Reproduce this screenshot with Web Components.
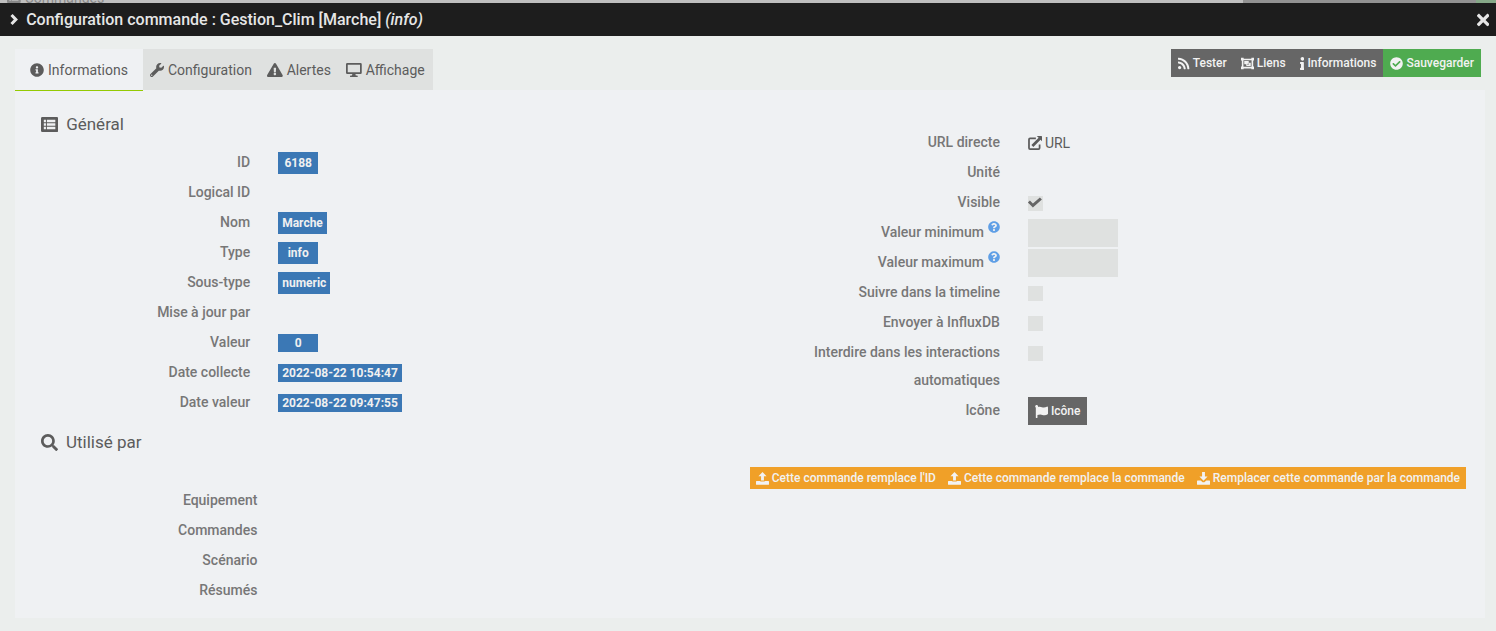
<!DOCTYPE html>
<html lang="fr">
<head>
<meta charset="utf-8">
<title>Configuration commande</title>
<style>
	body {
		margin: 0;
		min-height: 100vh;
		display: flex;
		flex-direction: column;
		background: #ebeeed;
		color: #5c5c5c;
		font: 14px/20px Roboto, "Liberation Sans", sans-serif;
	}
	cmd-dialog {
		flex: 1;
	}
</style>
</head>
<body>
<page-strip></page-strip>
<cmd-dialog>
	<span slot="title">Configuration commande : Gestion_Clim [Marche] <i>(info)</i></span>
	<cmd-toolbar></cmd-toolbar>
	<cmd-form></cmd-form>
</cmd-dialog>

<script>
/////////////////    icons    /////////////////
// name: [viewBox width, viewBox height, markup]
const icons = {
	'chevron': [320, 512, '<path d="M60 80l170 176L60 432" fill="none" stroke="currentColor" stroke-width="120"/>'],
	'times': [352, 512, '<path d="M242.72 256l100.07-100.07c12.28-12.28 12.28-32.19 0-44.48l-22.24-22.24c-12.28-12.28-32.19-12.28-44.48 0L176 189.28 75.93 89.21c-12.28-12.28-32.19-12.28-44.48 0L9.21 111.45c-12.28 12.28-12.28 32.19 0 44.48L109.28 256 9.21 356.07c-12.28 12.28-12.28 32.19 0 44.48l22.24 22.24c12.28 12.28 32.2 12.28 44.48 0L176 322.72l100.07 100.07c12.28 12.28 32.2 12.28 44.48 0l22.24-22.24c12.28-12.28 12.28-32.19 0-44.48L242.72 256z"/>'],
	'info-circle': [512, 512, '<path d="M256 8C119.043 8 8 119.083 8 256c0 136.997 111.043 248 248 248s248-111.003 248-248C504 119.083 392.957 8 256 8zm0 110c23.196 0 42 18.804 42 42s-18.804 42-42 42-42-18.804-42-42 18.804-42 42-42zm56 254c0 6.627-5.373 12-12 12h-88c-6.627 0-12-5.373-12-12v-24c0-6.627 5.373-12 12-12h12v-64h-12c-6.627 0-12-5.373-12-12v-24c0-6.627 5.373-12 12-12h64c6.627 0 12 5.373 12 12v100h12c6.627 0 12 5.373 12 12v24z"/>'],
	'wrench': [512, 512, '<path d="M507.73 109.1c-2.24-9.03-13.54-12.09-20.12-5.51l-74.36 74.36-67.88-11.31-11.31-67.88 74.36-74.36c6.62-6.62 3.43-17.9-5.66-20.16-47.38-11.74-99.55.91-136.58 37.93-39.64 39.64-50.55 97.1-34.05 147.2L18.74 402.76c-24.99 24.99-24.99 65.51 0 90.5 24.99 24.99 65.51 24.99 90.5 0l213.21-213.21c50.12 16.71 107.47 5.68 147.37-34.22 37.07-37.07 49.7-89.32 37.91-136.73zM64 472c-13.25 0-24-10.75-24-24 0-13.26 10.75-24 24-24s24 10.74 24 24c0 13.25-10.75 24-24 24z"/>'],
	'warning': [576, 512, '<path d="M569.517 440.013C587.975 472.007 564.806 512 527.94 512H48.054c-36.937 0-59.999-40.055-41.577-71.987L246.423 23.985c18.467-32.009 64.72-31.951 83.154 0l239.94 416.028zM288 354c-25.405 0-46 20.595-46 46s20.595 46 46 46 46-20.595 46-46-20.595-46-46-46zm-43.673-165.346l7.418 136c.347 6.364 5.609 11.346 11.982 11.346h48.546c6.373 0 11.635-4.982 11.982-11.346l7.418-136c.375-6.874-5.098-12.654-11.982-12.654h-63.383c-6.884 0-12.356 5.78-11.981 12.654z"/>'],
	'desktop': [576, 512, '<path fill-rule="evenodd" d="M48 0h480a48 48 0 0 1 48 48v304a48 48 0 0 1-48 48H344l14 56h46a24 24 0 0 1 24 24v32H148v-32a24 24 0 0 1 24-24h46l14-56H48a48 48 0 0 1-48-48V48A48 48 0 0 1 48 0zm16 64v272h448V64z"/>'],
	'list': [512, 448, '<path fill-rule="evenodd" d="M40 0h432a40 40 0 0 1 40 40v368a40 40 0 0 1-40 40H40a40 40 0 0 1-40-40V40A40 40 0 0 1 40 0zm44 84v76h64V84zm92 0v76h252V84zM84 188v72h64v-72zm92 0v72h252v-72zM84 288v76h64v-76zm92 0v76h252v-76z"/>'],
	'search': [512, 512, '<path d="M505 442.7L405.3 343c-4.5-4.5-10.6-7-17-7H372c27.6-35.3 44-79.7 44-128C416 93.1 322.9 0 208 0S0 93.1 0 208s93.1 208 208 208c48.3 0 92.7-16.4 128-44v16.3c0 6.4 2.5 12.5 7 17l99.7 99.7c9.4 9.4 24.6 9.4 33.9 0l28.3-28.3c9.4-9.4 9.4-24.6.1-34zM208 336c-70.7 0-128-57.2-128-128 0-70.7 57.2-128 128-128 70.7 0 128 57.2 128 128 0 70.7-57.2 128-128 128z"/>'],
	'rss': [448, 512, '<path d="M128.081 415.959c0 35.369-28.672 64.041-64.041 64.041S0 451.328 0 415.959s28.672-64.041 64.041-64.041 64.04 28.673 64.04 64.041zm175.66 47.25c-8.354-154.6-132.185-278.587-286.95-286.95C7.656 175.765 0 183.105 0 192.253v48.069c0 8.415 6.49 15.472 14.887 16.018 111.832 7.284 201.473 96.702 208.772 208.772.547 8.397 7.604 14.887 16.018 14.887h48.069c9.149.001 16.489-7.655 15.995-16.79zm144.249.288C439.596 229.677 251.465 40.445 16.503 32.01 7.473 31.686 0 38.981 0 48.016v48.068c0 8.625 6.835 15.645 15.453 15.999 191.179 7.839 344.627 161.316 352.465 352.465.353 8.618 7.373 15.453 15.999 15.453h48.068c9.034-.001 16.329-7.474 16.005-16.504z"/>'],
	'object-group': [512, 512, '<path fill-rule="evenodd" d="M0 32h104v32h304V32h104v104h-32v240h32v104H408v-32H104v32H0V376h32V136H0zm96 96v256h320V128z"/><path d="M128 160h176v64h80v128H208v-64h-80z"/><path d="M304 256v32h-64" fill="none" stroke="#666" stroke-width="24"/>'],
	'info': [192, 512, '<path d="M20 424.229h20V279.771H20c-11.046 0-20-8.954-20-20V212c0-11.046 8.954-20 20-20h112c11.046 0 20 8.954 20 20v212.229h20c11.046 0 20 8.954 20 20V492c0 11.046-8.954 20-20 20H20c-11.046 0-20-8.954-20-20v-47.771c0-11.046 8.954-20 20-20zM96 0C56.235 0 24 32.235 24 72s32.235 72 72 72 72-32.235 72-72S135.764 0 96 0z"/>'],
	'check-circle': [512, 512, '<path d="M504 256c0 136.967-111.033 248-248 248S8 392.967 8 256 119.033 8 256 8s248 111.033 248 248zM227.314 387.314l184-184c6.248-6.248 6.248-16.379 0-22.627l-22.627-22.627c-6.248-6.249-16.379-6.249-22.628 0L216 308.118l-70.059-70.059c-6.248-6.248-16.379-6.248-22.628 0l-22.627 22.627c-6.248 6.248-6.248 16.379 0 22.627l104 104c6.249 6.249 16.379 6.249 22.628.001z"/>'],
	'external': [512, 512, '<path d="M288 88H76a40 40 0 0 0-40 40v308a40 40 0 0 0 40 40h308a40 40 0 0 0 40-40V310" fill="none" stroke="currentColor" stroke-width="64"/><path d="M320 0h168a24 24 0 0 1 24 24v168l-52-52-264 264-72-72L388 68z"/>'],
	'question': [512, 512, '<path d="M504 256c0 136.997-111.043 248-248 248S8 392.997 8 256C8 119.083 119.043 8 256 8s248 111.083 248 248zM262.655 90c-54.497 0-89.255 22.957-116.549 63.758-3.536 5.286-2.353 12.415 2.715 16.258l34.699 26.31c5.205 3.947 12.621 3.008 16.665-2.122 17.864-22.658 30.113-35.797 57.303-35.797 20.429 0 45.698 13.148 45.698 32.958 0 14.976-12.363 22.667-32.534 33.976C247.128 238.528 216 254.941 216 296v4c0 6.627 5.373 12 12 12h56c6.627 0 12-5.373 12-12v-1.333c0-28.462 83.186-29.647 83.186-106.667 0-58.002-60.165-102-116.531-102zM256 338c-25.365 0-46 20.635-46 46 0 25.364 20.635 46 46 46s46-20.636 46-46c0-25.365-20.635-46-46-46z"/>'],
	'flag': [512, 512, '<path d="M349.565 98.783C295.978 98.783 251.721 64 184.348 64c-24.955 0-47.309 4.384-68.045 12.013a55.947 55.947 0 0 0 3.586-23.562C118.117 24.015 94.806 1.206 66.338.048 34.345-1.254 8 24.296 8 56c0 19.026 9.497 35.825 24 45.945V488c0 13.255 10.745 24 24 24h16c13.255 0 24-10.745 24-24v-94.4c28.311-12.064 63.582-22.122 114.435-22.122 53.588 0 97.844 34.783 165.217 34.783 48.169 0 86.667-16.294 122.505-40.858C506.84 359.452 512 349.571 512 339.045v-243.1c0-23.393-24.269-38.87-45.485-29.016-34.338 15.948-76.454 31.854-116.95 31.854z"/>'],
	'upload': [512, 512, '<path d="M256 0l160 168H312v168H200V168H96zM24 352h136a48 48 0 0 0 48 24h96a48 48 0 0 0 48-24h136a24 24 0 0 1 24 24v104a24 24 0 0 1-24 24H24a24 24 0 0 1-24-24V376a24 24 0 0 1 24-24z"/>'],
	'download': [512, 512, '<path d="M200 0h112v176h104L256 344 96 176h104zM24 336h120l80 64h64l80-64h120a24 24 0 0 1 24 24v120a24 24 0 0 1-24 24H24a24 24 0 0 1-24-24V360a24 24 0 0 1 24-24z"/>'],
};

class FaIcon extends HTMLElement {
	constructor() {
		super();
		this.attachShadow({ mode: 'open' });
	}

	connectedCallback() {
		const [w, h, body] = icons[this.getAttribute('name')];
		this.shadowRoot.innerHTML = `
			<style>
				:host { display: inline-flex; flex: none; }
				svg { height: var(--icon-size, 1em); width: auto; fill: currentColor; }
			</style>
			<svg viewBox="0 0 ${w} ${h}" aria-hidden="true">${body}</svg>
		`;
	}
}

customElements.define('fa-icon', FaIcon);


/////////////////    page behind the dialog    /////////////////
const stripTemplate = document.createElement('template');
stripTemplate.innerHTML = `
	<style>
		:host {
			display: flex;
			align-items: flex-end;
			height: 3px;
			overflow: hidden;
			background: #bfbfbf;
			color: #888;
			font-size: 14px;
			line-height: 10px;
		}
		.title { display: flex; align-items: flex-end; gap: 4px; padding-left: 7px; flex: 1; --icon-size: 12px; }
		.bar { width: 233px; height: 3px; background: #929292; }
		.save { width: 20px; height: 3px; background: #86a888; }
	</style>
	<div class="title"><fa-icon name="list"></fa-icon>Commandes</div>
	<div class="bar"></div>
	<div class="save"></div>
`;

class PageStrip extends HTMLElement {
	constructor() {
		super();
		this.attachShadow({ mode: 'open' });
		this.shadowRoot.appendChild(stripTemplate.content.cloneNode(true));
	}
}

customElements.define('page-strip', PageStrip);


/////////////////    dialog    /////////////////
const dialogTemplate = document.createElement('template');
dialogTemplate.innerHTML = `
	<style>
		:host { display: block; }
		header {
			display: flex;
			align-items: center;
			gap: 8px;
			height: 33px;
			padding: 0 7px 0 10px;
			background: #1d1d1d;
			color: #e6e6e6;
			font-size: 16px;
			font-weight: 500;
		}
		.chevron { --icon-size: 13px; }
		.title { flex: 1; }
		button {
			display: flex;
			padding: 0;
			border: 0;
			background: none;
			color: inherit;
			--icon-size: 18px;
		}
		main { padding: 13px 11px 13px 15px; }
	</style>
	<header>
		<fa-icon class="chevron" name="chevron"></fa-icon>
		<div class="title"><slot name="title"></slot></div>
		<button type="button" aria-label="Fermer"><fa-icon name="times"></fa-icon></button>
	</header>
	<main><slot></slot></main>
`;

class CmdDialog extends HTMLElement {
	constructor() {
		super();
		this.attachShadow({ mode: 'open' });
		this.shadowRoot.appendChild(dialogTemplate.content.cloneNode(true));
	}
}

customElements.define('cmd-dialog', CmdDialog);


/////////////////    tabs and actions    /////////////////
const toolbarTemplate = document.createElement('template');
toolbarTemplate.innerHTML = `
	<style>
		:host {
			display: flex;
			justify-content: space-between;
			align-items: flex-start;
			padding-right: 4px;
		}
		nav { display: flex; align-items: flex-start; }
		a {
			display: flex;
			align-items: center;
			gap: 4px;
			height: 41px;
			padding: 0 8px 0 7px;
			background: #dfe1e0;
			color: inherit;
			text-decoration: none;
		}
		a.active {
			padding: 0 15px;
			background: #eff1f3;
			border-bottom: 1px solid #94ca02;
		}
		.actions { display: flex; }
		cmd-button[kind="success"] { --btn-bg: #4fab50; }
	</style>
	<nav>
		<a class="active" href="#informations"><fa-icon name="info-circle"></fa-icon>Informations</a>
		<a href="#configuration"><fa-icon name="wrench"></fa-icon>Configuration</a>
		<a href="#alertes"><fa-icon name="warning"></fa-icon>Alertes</a>
		<a href="#affichage"><fa-icon name="desktop"></fa-icon>Affichage</a>
	</nav>
	<div class="actions">
		<cmd-button icon="rss">Tester</cmd-button>
		<cmd-button icon="object-group">Liens</cmd-button>
		<cmd-button icon="info">Informations</cmd-button>
		<cmd-button icon="check-circle" kind="success">Sauvegarder</cmd-button>
	</div>
`;

class CmdToolbar extends HTMLElement {
	constructor() {
		super();
		this.attachShadow({ mode: 'open' });
		this.shadowRoot.appendChild(toolbarTemplate.content.cloneNode(true));
	}
}

class CmdButton extends HTMLElement {
	constructor() {
		super();
		this.attachShadow({ mode: 'open' });
	}

	connectedCallback() {
		this.shadowRoot.innerHTML = `
			<style>
				:host { display: inline-flex; --icon-size: 13px; }
				button {
					display: flex;
					align-items: center;
					gap: 3px;
					height: var(--btn-height, 28px);
					padding: var(--btn-pad, 0 7px);
					border: 0;
					background: var(--btn-bg, #666);
					color: #f2f2f2;
					font: 500 12px/18px Roboto, "Liberation Sans", sans-serif;
					white-space: nowrap;
				}
			</style>
			<button type="button"><fa-icon name="${this.getAttribute('icon')}"></fa-icon><span><slot></slot></span></button>
		`;
	}
}

customElements.define('cmd-button', CmdButton);
customElements.define('cmd-toolbar', CmdToolbar);


/////////////////    form parts    /////////////////
const rowTemplate = document.createElement('template');
rowTemplate.innerHTML = `
	<style>
		:host {
			display: grid;
			grid-template-columns: var(--label-width) 1fr;
			column-gap: 28px;
			padding-bottom: 2px;
			line-height: 28px;
		}
		.label { text-align: right; font-weight: 500; color: #777; }
		.value { display: flex; align-items: center; height: 28px; padding-top: 1px; margin-bottom: -1px; }
	</style>
	<div class="label"><slot name="label"></slot></div>
	<div class="value"><slot></slot></div>
`;

class FormRow extends HTMLElement {
	constructor() {
		super();
		this.attachShadow({ mode: 'open' });
		this.shadowRoot.appendChild(rowTemplate.content.cloneNode(true));
	}
}

customElements.define('form-row', FormRow);

class ValueLabel extends HTMLElement {
	constructor() {
		super();
		this.attachShadow({ mode: 'open' });
		this.shadowRoot.innerHTML = `
			<style>
				:host {
					box-sizing: border-box;
					min-width: 40px;
					padding: 0 4px;
					background: #3b78b5;
					color: #f0f0f0;
					font-size: 12px;
					font-weight: 700;
					line-height: 18px;
					text-align: center;
				}
				:host([tall]) { line-height: 22px; }
			</style>
			<slot></slot>
		`;
	}
}

customElements.define('value-label', ValueLabel);


/////////////////    form    /////////////////
const formTemplate = document.createElement('template');
formTemplate.innerHTML = `
	<style>
		:host {
			display: block;
			margin-top: -1px;
			padding: 20px 0 12px;
			background: #eff1f3;
		}
		.columns { display: grid; grid-template-columns: 1fr 1fr; }
		.left { --label-width: 32%; }
		.right { --label-width: 34%; padding-top: 18px; }
		.used { --label-width: 33%; padding-top: 19px; }
		h2 {
			display: flex;
			align-items: center;
			gap: 8px;
			margin: 0 0 10px;
			padding-left: 26px;
			font-size: 17px;
			font-weight: 400;
			line-height: 28px;
		}
		h2.second { margin: 2px 0 11px; }
		h2 fa-icon { --icon-size: 17px; }
		h2 fa-icon[name="list"] { --icon-size: 15px; }
		.help { --icon-size: 12px; color: #5f9fe6; margin-left: 4px; vertical-align: 4px; line-height: 12px; }
		input { margin: 0; border: 0; border-radius: 0; background: #dfe1e0; font: inherit; }
		input[type="number"] { box-sizing: border-box; width: 90px; height: 28px; }
		input[type="checkbox"] { appearance: none; width: 15px; height: 15px; }
		input[type="checkbox"]:checked::before {
			content: "";
			display: block;
			width: 15px;
			height: 15px;
			background: #666;
			clip-path: polygon(0 7px, 2px 5px, 5px 8px, 12px 2px, 14px 4px, 5px 12px);
		}
		a { display: flex; align-items: center; gap: 3px; color: inherit; text-decoration: none; }
		.replace {
			display: flex;
			justify-self: end;
			align-self: start;
			margin-right: 19px;
			--btn-bg: #f0a028;
			--btn-height: 22px;
			--btn-pad: 0 6px;
		}
	</style>
	<div class="columns">
		<section class="left">
			<h2><fa-icon name="list"></fa-icon>Général</h2>
			<form-row><span slot="label">ID</span><value-label tall>6188</value-label></form-row>
			<form-row><span slot="label">Logical ID</span></form-row>
			<form-row><span slot="label">Nom</span><value-label tall>Marche</value-label></form-row>
			<form-row><span slot="label">Type</span><value-label tall>info</value-label></form-row>
			<form-row><span slot="label">Sous-type</span><value-label tall>numeric</value-label></form-row>
			<form-row><span slot="label">Mise à jour par</span></form-row>
			<form-row><span slot="label">Valeur</span><value-label>0</value-label></form-row>
			<form-row><span slot="label">Date collecte</span><value-label>2022-08-22 10:54:47</value-label></form-row>
			<form-row><span slot="label">Date valeur</span><value-label>2022-08-22 09:47:55</value-label></form-row>
		</section>
		<section class="right">
			<form-row><span slot="label">URL directe</span><a href="#url"><fa-icon name="external"></fa-icon>URL</a></form-row>
			<form-row><span slot="label">Unité</span></form-row>
			<form-row><label slot="label" for="visible">Visible</label><input id="visible" type="checkbox" checked></form-row>
			<form-row><label slot="label" for="min">Valeur minimum<fa-icon class="help" name="question"></fa-icon></label><input id="min" type="number"></form-row>
			<form-row><label slot="label" for="max">Valeur maximum<fa-icon class="help" name="question"></fa-icon></label><input id="max" type="number"></form-row>
			<form-row><label slot="label" for="timeline">Suivre dans la timeline</label><input id="timeline" type="checkbox"></form-row>
			<form-row><label slot="label" for="influx">Envoyer à InfluxDB</label><input id="influx" type="checkbox"></form-row>
			<form-row><label slot="label" for="interact">Interdire dans les interactions automatiques</label><input id="interact" type="checkbox"></form-row>
			<form-row><span slot="label">Icône</span><cmd-button icon="flag">Icône</cmd-button></form-row>
		</section>
	</div>
	<h2 class="second"><fa-icon name="search"></fa-icon>Utilisé par</h2>
	<div class="columns">
		<section class="used">
			<form-row><span slot="label">Equipement</span></form-row>
			<form-row><span slot="label">Commandes</span></form-row>
			<form-row><span slot="label">Scénario</span></form-row>
			<form-row><span slot="label">Résumés</span></form-row>
		</section>
		<div class="replace">
			<cmd-button icon="upload">Cette commande remplace l'ID</cmd-button>
			<cmd-button icon="upload">Cette commande remplace la commande</cmd-button>
			<cmd-button icon="download">Remplacer cette commande par la commande</cmd-button>
		</div>
	</div>
`;

class CmdForm extends HTMLElement {
	constructor() {
		super();
		this.attachShadow({ mode: 'open' });
		this.shadowRoot.appendChild(formTemplate.content.cloneNode(true));
	}
}

customElements.define('cmd-form', CmdForm);
</script>
</body>
</html>
